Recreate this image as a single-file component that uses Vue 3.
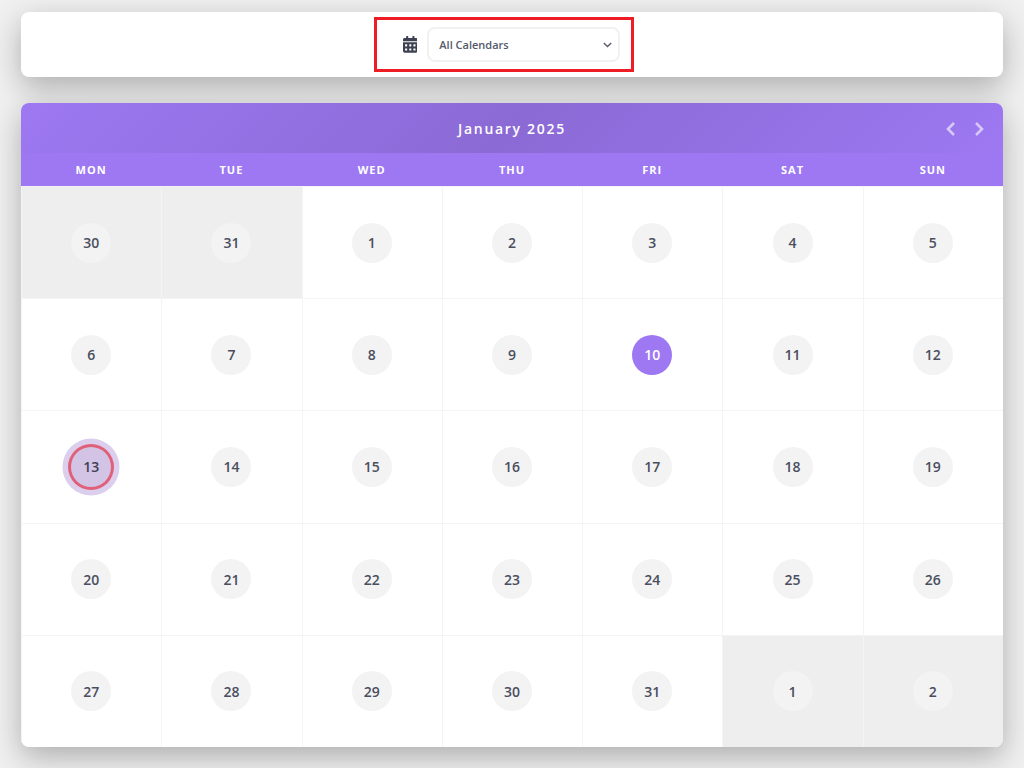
<template>
  <div class="page">
    <!-- 顶部筛选栏 -->
    <div class="toolbar">
      <div class="filter">
        <svg class="cal-icon" viewBox="0 0 448 512" width="14.6" height="16.7">
          <path fill="#3d4152" d="M0 464c0 26.5 21.5 48 48 48h352c26.5 0 48-21.5 48-48V192H0v272zm320-196c0-6.6 5.4-12 12-12h40c6.6 0 12 5.4 12 12v40c0 6.6-5.4 12-12 12h-40c-6.6 0-12-5.4-12-12v-40zm0 128c0-6.6 5.4-12 12-12h40c6.6 0 12 5.4 12 12v40c0 6.6-5.4 12-12 12h-40c-6.6 0-12-5.4-12-12v-40zM192 268c0-6.6 5.4-12 12-12h40c6.6 0 12 5.4 12 12v40c0 6.6-5.4 12-12 12h-40c-6.6 0-12-5.4-12-12v-40zm0 128c0-6.6 5.4-12 12-12h40c6.6 0 12 5.4 12 12v40c0 6.6-5.4 12-12 12h-40c-6.6 0-12-5.4-12-12v-40zM64 268c0-6.6 5.4-12 12-12h40c6.6 0 12 5.4 12 12v40c0 6.6-5.4 12-12 12H76c-6.6 0-12-5.4-12-12v-40zm0 128c0-6.6 5.4-12 12-12h40c6.6 0 12 5.4 12 12v40c0 6.6-5.4 12-12 12H76c-6.6 0-12-5.4-12-12v-40zM400 64h-48V16c0-8.8-7.2-16-16-16h-32c-8.8 0-16 7.2-16 16v48H160V16c0-8.8-7.2-16-16-16h-32c-8.8 0-16 7.2-16 16v48H48C21.5 64 0 85.5 0 112v48h448v-48c0-26.5-21.5-48-48-48z"/>
        </svg>
        <div class="select">
          <span>All Calendars</span>
          <svg width="9" height="6" viewBox="0 0 9 6" fill="none">
            <path d="M0.8 0.9 4.5 4.6 8.2 0.9" stroke="#565a6a" stroke-width="1.4"/>
          </svg>
        </div>
        <!-- 红色标注框 -->
        <div class="highlight"></div>
      </div>
    </div>

    <!-- 日历 -->
    <div class="calendar">
      <div class="cal-header">
        <div class="title">January 2025</div>
        <div class="nav">
          <svg width="11" height="16" viewBox="0 0 11 16" fill="none">
            <path d="M9 2 3 8 9 14" stroke="#fff" stroke-opacity="0.6" stroke-width="2.6"/>
          </svg>
          <svg width="11" height="16" viewBox="0 0 11 16" fill="none">
            <path d="M2 2 8 8 2 14" stroke="#fff" stroke-opacity="0.6" stroke-width="2.6"/>
          </svg>
        </div>
      </div>
      <div class="weekdays">
        <div v-for="d in weekdays" :key="d" class="weekday">{{ d }}</div>
      </div>
      <div class="grid">
        <div
          v-for="c in cells"
          :key="c.key"
          class="cell"
          :class="{ outside: c.outside }"
        >
          <div class="day" :class="{ selected: c.selected, today: c.today }">{{ c.day }}</div>
        </div>
      </div>
    </div>
  </div>
</template>

<script setup>
const weekdays = ['MON', 'TUE', 'WED', 'THU', 'FRI', 'SAT', 'SUN']

const days = [
  [30, true], [31, true],
  ...Array.from({ length: 31 }, (_, i) => [i + 1, false]),
  [1, true], [2, true]
]

const cells = days.map(([day, outside], i) => ({
  key: i,
  day,
  outside,
  selected: !outside && day === 10,
  today: !outside && day === 13
}))
</script>

<style scoped>
.page {
  padding: 12px 21px 0;
  font-family: "Open Sans", "Liberation Sans", sans-serif;
}

/* 筛选栏 */
.toolbar {
  height: 65px;
  background: #fff;
  border-radius: 8px;
  box-shadow: 0 10px 30px rgba(0, 0, 0, 0.28);
  display: flex;
  align-items: center;
  justify-content: center;
}

.filter {
  position: relative;
  margin-left: -1px;
  display: flex;
  align-items: center;
  gap: 10px;
}

.cal-icon {
  display: block;
}

.select {
  width: 193px;
  height: 35px;
  box-sizing: border-box;
  border: 2px solid #f1f1f1;
  border-radius: 8px;
  padding: 0 6px 0 10px;
  display: flex;
  align-items: center;
  justify-content: space-between;
  font-size: 11px;
  font-weight: 600;
  color: #555a6b;
}

.highlight {
  position: absolute;
  top: -10px;
  right: -14px;
  bottom: -10px;
  left: -29px;
  border: 3px solid #ee1c25;
}

/* 日历 */
.calendar {
  margin-top: 26px;
  background: #fff;
  border-radius: 8px;
  overflow: hidden;
  box-shadow: 0 10px 30px rgba(0, 0, 0, 0.28);
}

.cal-header {
  position: relative;
  height: 50px;
  background: linear-gradient(135deg, #9d78f2 0%, #8b6ad5 50%, #9d78f2 100%);
  display: flex;
  align-items: center;
  justify-content: center;
}

.title {
  font-size: 14px;
  font-weight: 600;
  letter-spacing: 1.7px;
  color: #fff;
}

.nav {
  position: absolute;
  right: 18px;
  top: 18px;
  display: flex;
  gap: 18px;
}

.nav svg {
  display: block;
}

.weekdays {
  height: 33px;
  background: #9d78f2;
  display: grid;
  grid-template-columns: repeat(7, 1fr);
}

.weekday {
  display: flex;
  align-items: center;
  justify-content: center;
  font-size: 11px;
  font-weight: 700;
  letter-spacing: 1px;
  color: #fff;
}

.grid {
  height: 561px;
  display: grid;
  grid-template-columns: repeat(7, 1fr);
  grid-template-rows: repeat(5, 1fr);
}

/* 竖线用 inset 阴影，数字圆才能居中 */
.cell {
  box-sizing: border-box;
  border-top: 1px solid #f4f4f4;
  box-shadow: inset 1px 0 0 #f4f4f4;
  display: flex;
  align-items: center;
  justify-content: center;
}

.cell.outside {
  background: #eeeeee;
}

.day {
  width: 40px;
  height: 40px;
  border-radius: 50%;
  background: #f3f3f3;
  display: flex;
  align-items: center;
  justify-content: center;
  font-size: 14px;
  font-weight: 600;
  color: #4a4e5e;
}

.day.selected {
  background: #9d78f2;
  color: #fff;
}

.day.today {
  background: #d3c3e5;
  color: #3d4152;
  box-shadow: 0 0 0 3px #df6078, 0 0 0 8.5px #dccfee;
}
</style>

<style>
body {
  background: #f0f0f0;
  min-height: 768px;
}
</style>
